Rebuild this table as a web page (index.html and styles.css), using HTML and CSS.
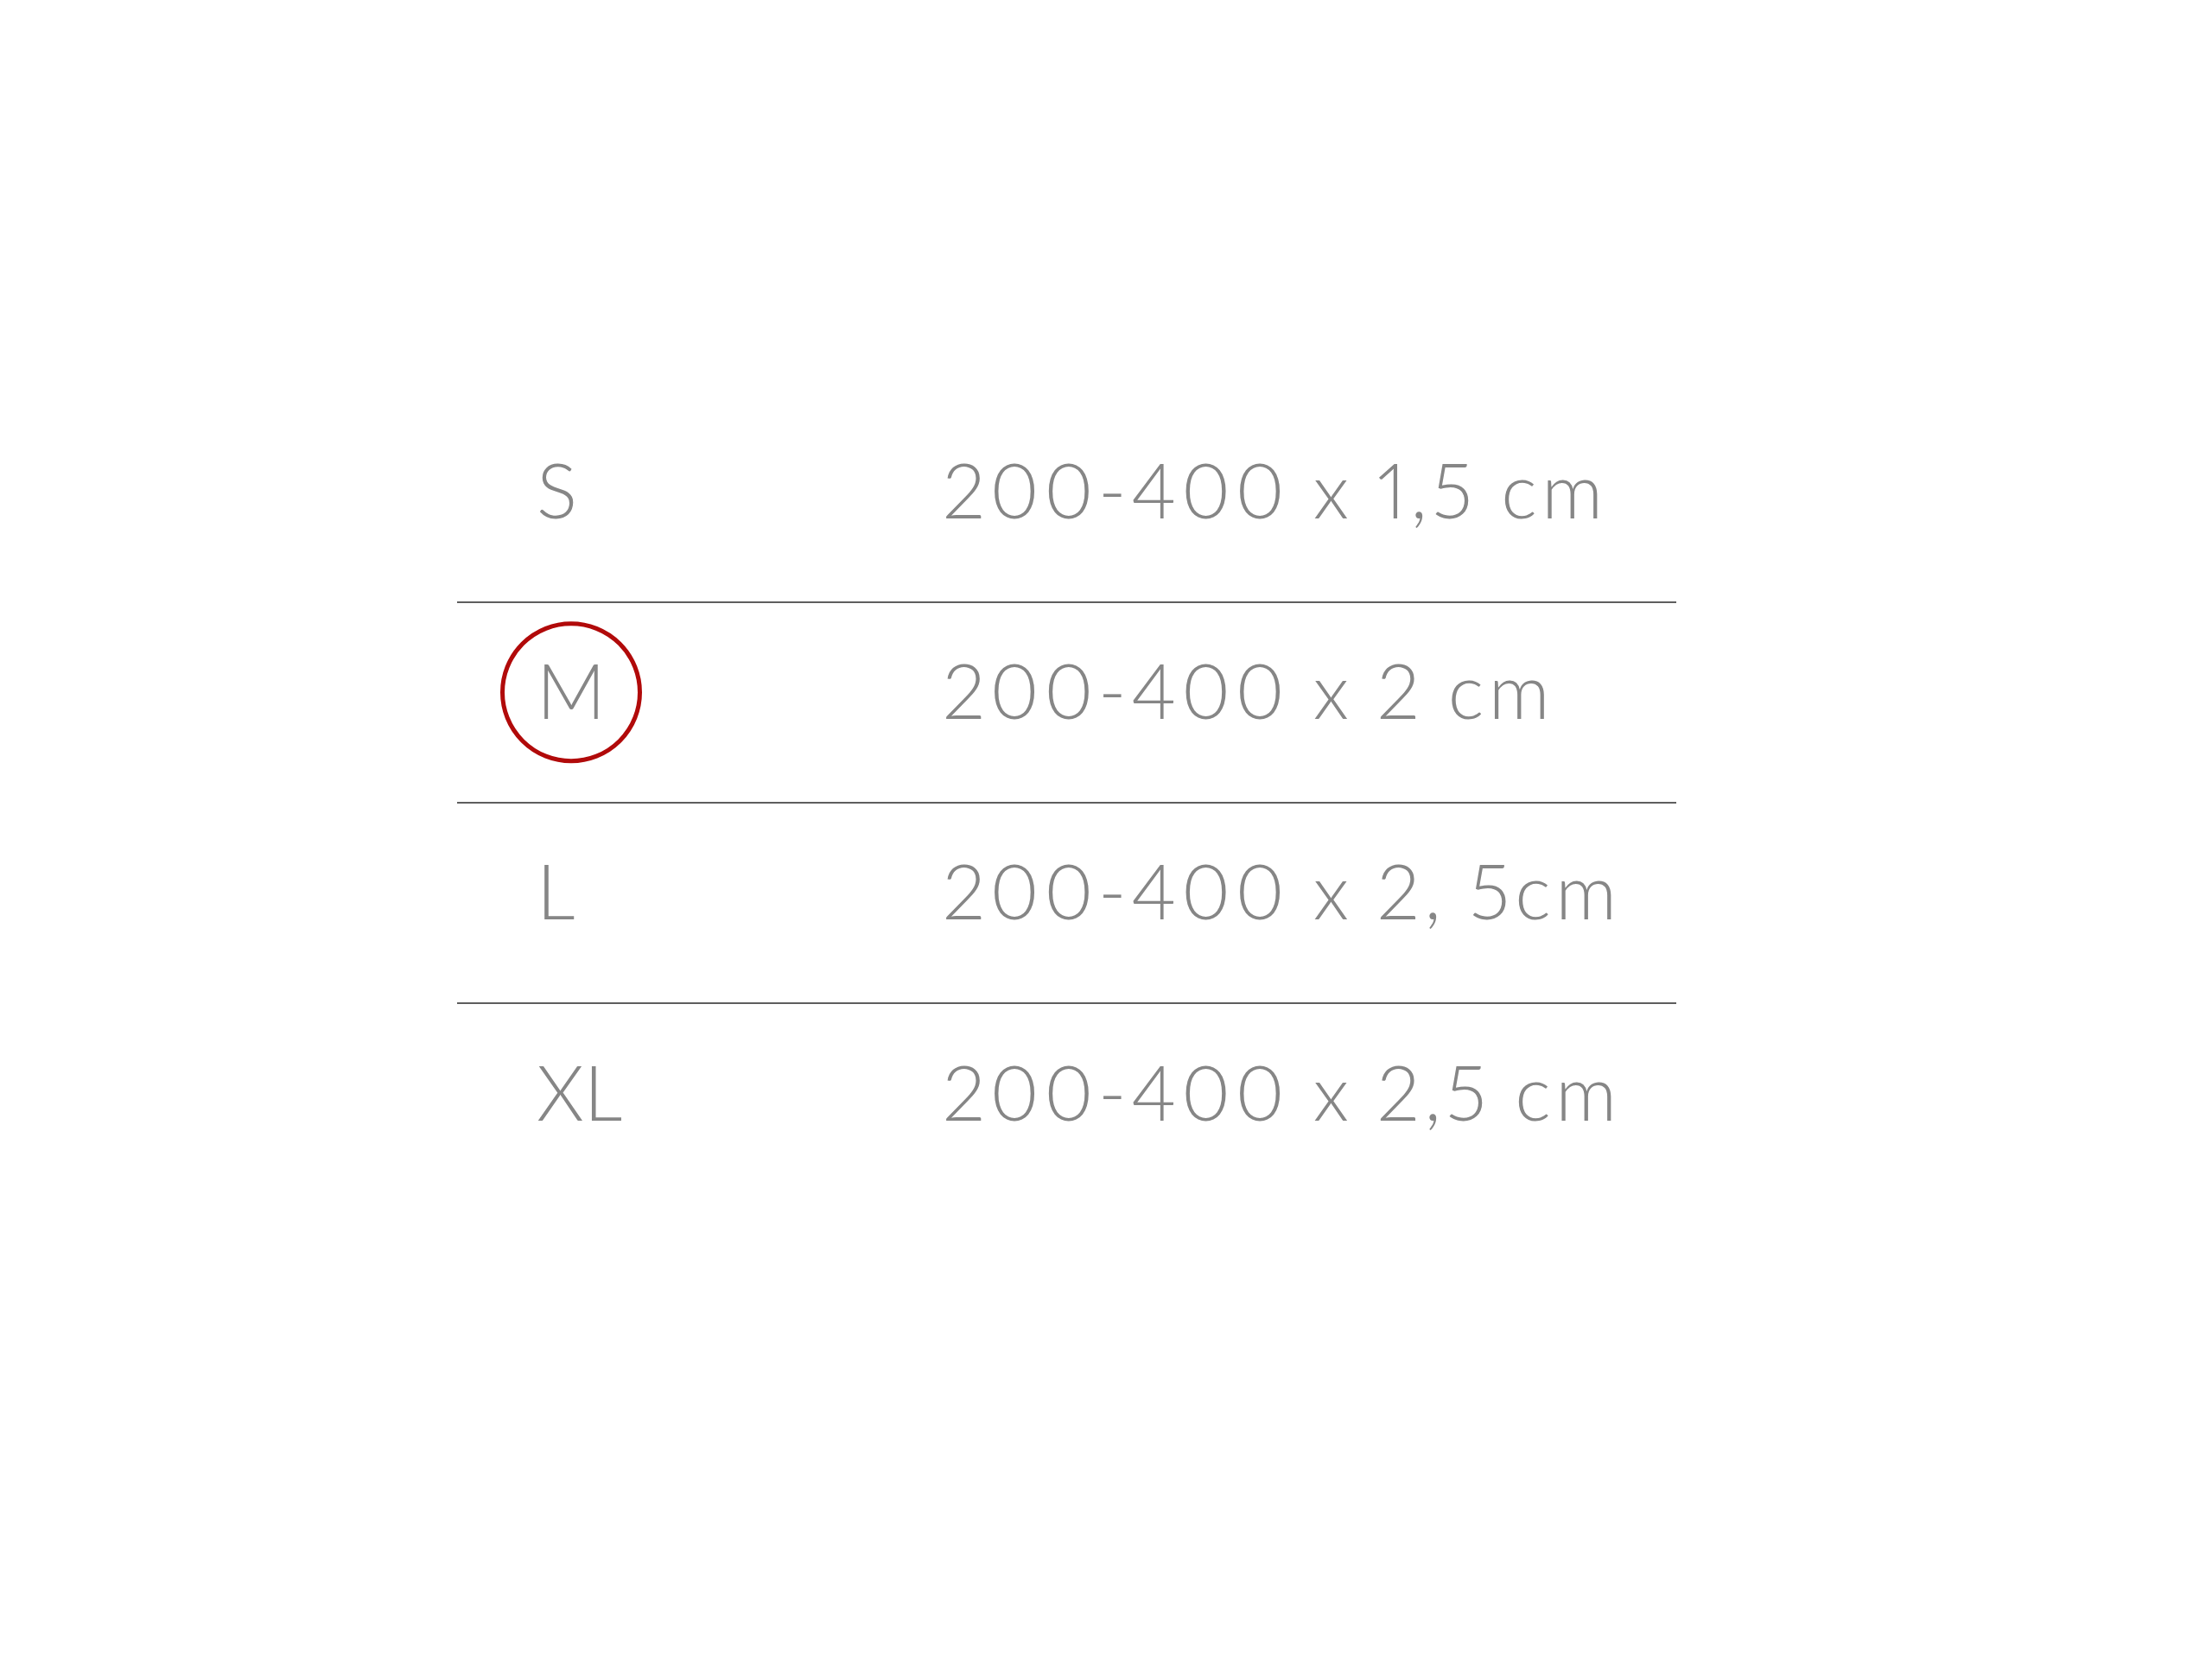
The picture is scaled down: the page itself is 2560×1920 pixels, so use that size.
FILE: index.html
```html
<!DOCTYPE html>
<html lang="pl">
<head>
<meta charset="utf-8">
<title>Rozmiary</title>
<link rel="stylesheet" href="styles.css">
</head>
<body>
<main class="page">
  <section class="size-table">
    <div class="row">
      <div class="size"><span class="label">S</span></div>
      <div class="value">200-400 x 1,5 cm</div>
    </div>
    <div class="row">
      <div class="size"><span class="label active">M</span></div>
      <div class="value">200-400 x 2 cm</div>
    </div>
    <div class="row">
      <div class="size"><span class="label">L</span></div>
      <div class="value">200-400 x 2, 5cm</div>
    </div>
    <div class="row">
      <div class="size"><span class="label">XL</span></div>
      <div class="value">200-400 x 2,5 cm</div>
    </div>
  </section>
</main>
</body>
</html>
```

FILE: styles.css
```css
html, body {
  margin: 0;
  padding: 0;
  background: #ffffff;
}

.page {
  width: 2560px;
  height: 1920px;
  box-sizing: border-box;
  padding: 466px 0 0 529px;
}

.size-table {
  width: 1411px;
  display: flex;
  flex-direction: column;
  font-family: "Lato", "Open Sans", sans-serif;
  font-weight: 300;
  font-size: 88px;
  color: #868686;
  font-variant-numeric: proportional-nums;
}

.row {
  height: 232px;
  box-sizing: border-box;
  display: grid;
  grid-template-columns: 562px 1fr;
  align-items: center;
  padding-bottom: 30px;
  border-bottom: 2px solid #5e5e5e;
}

.row:last-child {
  border-bottom: none;
}

.size {
  padding-left: 92px;
}

.label {
  position: relative;
  display: inline-block;
  line-height: 1;
}

.label.active::before {
  content: "";
  position: absolute;
  left: 50%;
  top: 50%;
  width: 154px;
  height: 154px;
  border: 5px solid #b10a0a;
  border-radius: 50%;
  transform: translate(-50%, -48%);
}

.value {
  line-height: 1;
  letter-spacing: 5.5px;
  word-spacing: -2px;
  white-space: nowrap;
}
```
